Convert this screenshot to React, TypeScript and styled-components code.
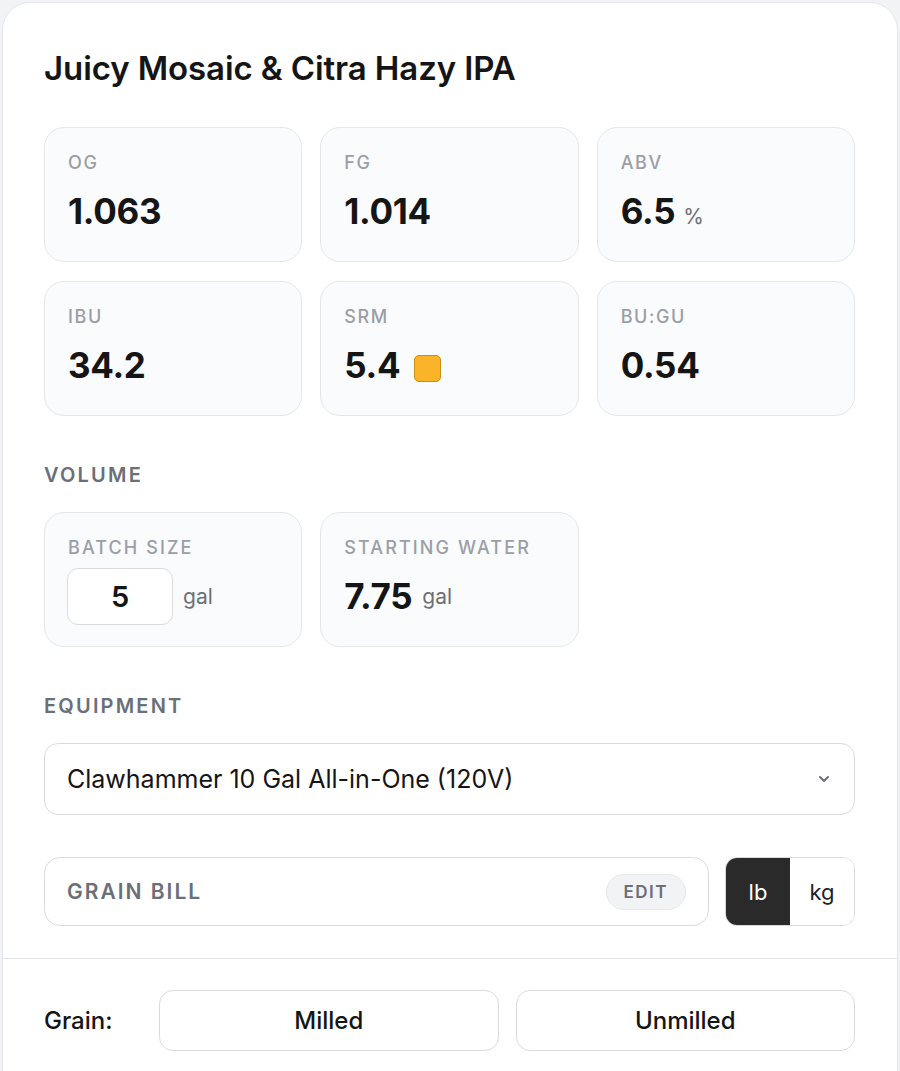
import React, { useState } from 'react';
import styled, { createGlobalStyle } from 'styled-components';

const GlobalStyle = createGlobalStyle`
  html, body {
    margin: 0;
    padding: 0;
    background: #f2f3f5;
    font-family: Inter, "Noto Sans", "Liberation Sans", sans-serif;
    color: #111111;
  }
  * { box-sizing: border-box; }
`;

const Card = styled.div`
  margin: 2px 2px 0 2px;
  background: #ffffff;
  border: 1px solid #e3e5e8;
  border-radius: 28px;
  min-height: 1100px;
  overflow: hidden;
`;

const Body = styled.div`
  padding: 46px 42px 32px 41px;
`;

const Title = styled.h1`
  margin: 0 0 40px 0;
  font-size: 33px;
  line-height: 38px;
  font-weight: 600;
  letter-spacing: -0.1px;
  color: #151515;
`;

const StatGrid = styled.div`
  display: grid;
  grid-template-columns: repeat(3, 1fr);
  gap: 19px 18px;
`;

const StatCard = styled.div`
  background: #fafbfc;
  border: 1px solid #e4e6ea;
  border-radius: 20px;
  padding: 25px 23px 0 23px;
  height: 135px;
`;

const StatLabel = styled.div<{ $wide?: boolean }>`
  font-size: 18px;
  line-height: 20px;
  font-weight: 500;
  letter-spacing: ${(p) => (p.$wide ? '2.1px' : '1.6px')};
  color: #9a9ea6;
  text-transform: uppercase;
`;

const StatValueRow = styled.div`
  display: flex;
  align-items: baseline;
  margin-top: 18px;
  gap: 8px;
`;

const StatValue = styled.span`
  font-size: 35px;
  line-height: 40px;
  font-weight: 700;
  letter-spacing: -0.3px;
  color: #151515;
`;

const Unit = styled.span`
  font-size: 21px;
  font-weight: 400;
  color: #6b6f76;
`;

const Swatch = styled.span<{ $color: string }>`
  display: inline-block;
  width: 27px;
  height: 27px;
  margin-left: 6px;
  border-radius: 5px;
  background: ${(p) => p.$color};
  border: 1.5px solid #c98e14;
  align-self: center;
  margin-top: 6px;
`;

const SectionLabel = styled.div`
  margin: 48px 0 26px 0;
  font-size: 20px;
  line-height: 22px;
  font-weight: 600;
  letter-spacing: 2.2px;
  color: #6b6f78;
`;

const VolumeRow = styled.div`
  display: flex;
  align-items: center;
  gap: 10px;
  margin-top: 10px;
`;

const NumberInput = styled.input`
  width: 106px;
  height: 57px;
  border: 1px solid #d9dbdf;
  border-radius: 11px;
  background: #ffffff;
  font-family: inherit;
  font-size: 29px;
  font-weight: 600;
  color: #151515;
  text-align: center;
  outline: none;
  margin-left: -1px;
`;

const VolumeValue = styled.span`
  font-size: 35px;
  line-height: 57px;
  font-weight: 700;
  letter-spacing: -0.3px;
  color: #151515;
`;

const Select = styled.div`
  display: flex;
  align-items: center;
  justify-content: space-between;
  height: 72px;
  padding: 0 22px;
  border: 1px solid #d9dbdf;
  border-radius: 14px;
  background: #ffffff;
  font-size: 25px;
  color: #151515;
`;

const GrainBillRow = styled.div`
  display: flex;
  gap: 16px;
  margin-top: 42px;
`;

const GrainBillBox = styled.div`
  flex: 1;
  display: flex;
  align-items: center;
  justify-content: space-between;
  height: 69px;
  padding: 0 22px;
  border: 1px solid #d9dbdf;
  border-radius: 16px;
  background: #ffffff;
`;

const GrainBillLabel = styled.span`
  font-size: 21px;
  font-weight: 600;
  letter-spacing: 2px;
  color: #6b6f78;
`;

const EditPill = styled.button`
  height: 36px;
  padding: 0 17px;
  border: 1px solid #e6e7ea;
  border-radius: 18px;
  background: #f2f3f5;
  font-family: inherit;
  font-size: 17px;
  font-weight: 600;
  letter-spacing: 1.5px;
  color: #6b6f78;
`;

const UnitToggle = styled.div`
  display: flex;
  width: 130px;
  height: 69px;
  border: 1px solid #d9dbdf;
  border-radius: 12px;
  overflow: hidden;
`;

const UnitButton = styled.button<{ $active?: boolean }>`
  flex: 1;
  border: none;
  font-family: inherit;
  font-size: 22px;
  background: ${(p) => (p.$active ? '#2a2a2a' : '#ffffff')};
  color: ${(p) => (p.$active ? '#ffffff' : '#222222')};
`;

const Footer = styled.div`
  border-top: 1px solid #e3e5e8;
  padding: 31px 42px 0 41px;
  display: flex;
  align-items: center;
  gap: 17px;
`;

const FooterLabel = styled.span`
  width: 98px;
  font-size: 24px;
  font-weight: 500;
  color: #151515;
`;

const ChoiceButton = styled.button`
  flex: 1;
  height: 61px;
  border: 1px solid #d9dbdf;
  border-radius: 14px;
  background: #ffffff;
  font-family: inherit;
  font-size: 24px;
  font-weight: 500;
  color: #151515;
`;

const Chevron = () => (
  <svg width="16" height="16" viewBox="0 0 24 24" fill="none" stroke="#6b6f76" strokeWidth="3" strokeLinecap="round" strokeLinejoin="round">
    <path d="M6 9l6 6 6-6" />
  </svg>
);

const stats = [
  { label: 'OG', value: '1.063' },
  { label: 'FG', value: '1.014' },
  { label: 'ABV', value: '6.5', unit: '%' },
  { label: 'IBU', value: '34.2' },
  { label: 'SRM', value: '5.4', swatch: '#fbb32a' },
  { label: 'BU:GU', value: '0.54' },
];

export default function App() {
  const [batch, setBatch] = useState('5');
  const [unit, setUnit] = useState<'lb' | 'kg'>('lb');

  return (
    <>
      <GlobalStyle />
      <Card>
        <Body>
          <Title>Juicy Mosaic &amp; Citra Hazy IPA</Title>

          <StatGrid>
            {stats.map((s) => (
              <StatCard key={s.label}>
                <StatLabel>{s.label}</StatLabel>
                <StatValueRow>
                  <StatValue>{s.value}</StatValue>
                  {s.unit && <Unit>{s.unit}</Unit>}
                  {s.swatch && <Swatch $color={s.swatch} />}
                </StatValueRow>
              </StatCard>
            ))}
          </StatGrid>

          <SectionLabel>VOLUME</SectionLabel>
          <StatGrid>
            <StatCard>
              <StatLabel $wide>Batch size</StatLabel>
              <VolumeRow>
                <NumberInput value={batch} onChange={(e) => setBatch(e.target.value)} />
                <Unit>gal</Unit>
              </VolumeRow>
            </StatCard>
            <StatCard>
              <StatLabel $wide>Starting water</StatLabel>
              <VolumeRow>
                <VolumeValue>7.75</VolumeValue>
                <Unit>gal</Unit>
              </VolumeRow>
            </StatCard>
          </StatGrid>

          <SectionLabel>EQUIPMENT</SectionLabel>
          <Select>
            <span>Clawhammer 10 Gal All-in-One (120V)</span>
            <Chevron />
          </Select>

          <GrainBillRow>
            <GrainBillBox>
              <GrainBillLabel>GRAIN BILL</GrainBillLabel>
              <EditPill>EDIT</EditPill>
            </GrainBillBox>
            <UnitToggle>
              <UnitButton $active={unit === 'lb'} onClick={() => setUnit('lb')}>lb</UnitButton>
              <UnitButton $active={unit === 'kg'} onClick={() => setUnit('kg')}>kg</UnitButton>
            </UnitToggle>
          </GrainBillRow>
        </Body>

        <Footer>
          <FooterLabel>Grain:</FooterLabel>
          <ChoiceButton>Milled</ChoiceButton>
          <ChoiceButton>Unmilled</ChoiceButton>
        </Footer>
      </Card>
    </>
  );
}
